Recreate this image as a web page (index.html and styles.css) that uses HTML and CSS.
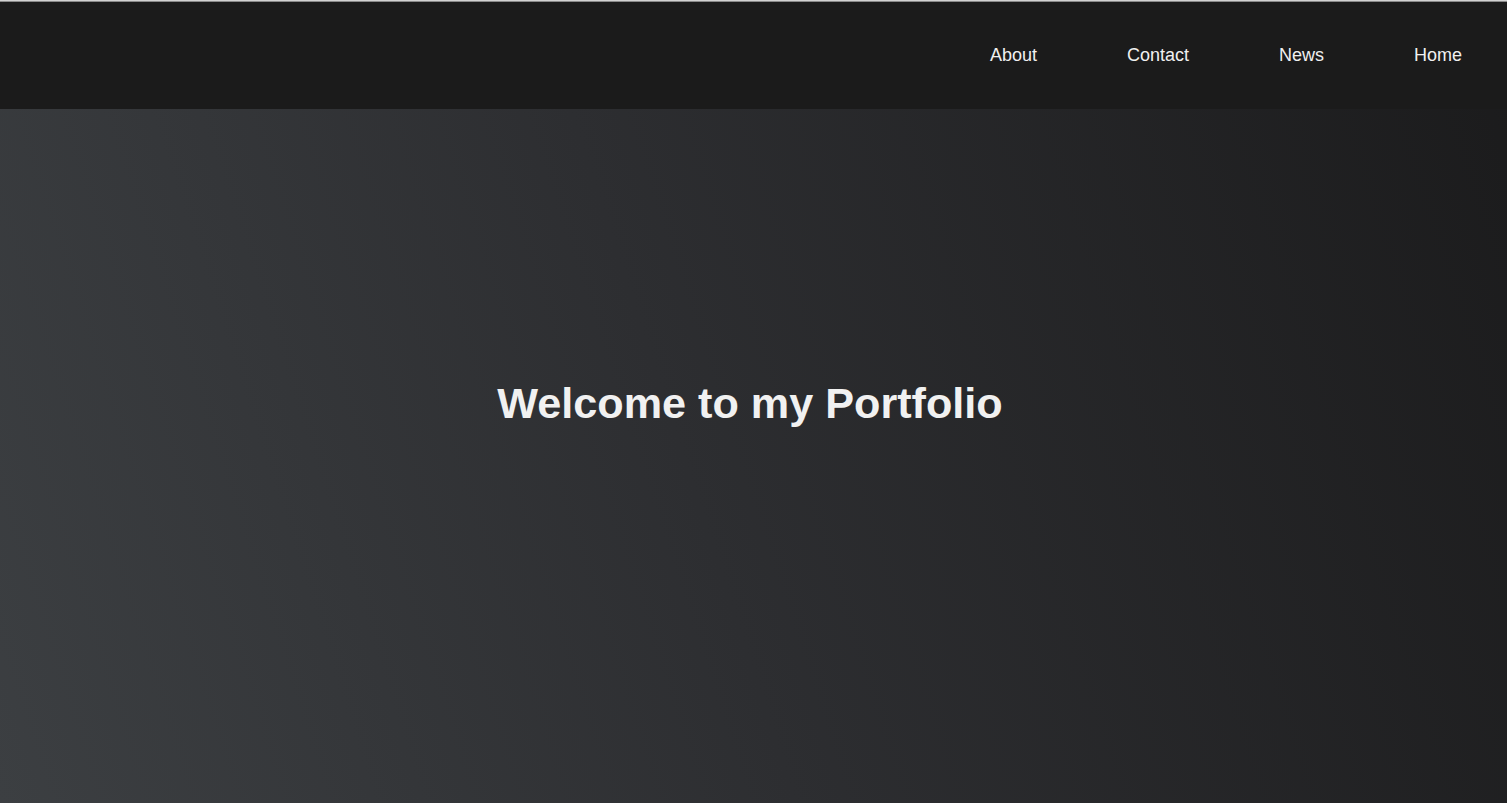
FILE: index.html
```html
<!DOCTYPE html>
<html lang="en">
<head>
<meta charset="utf-8">
<title>Portfolio</title>
<link rel="stylesheet" href="styles.css">
</head>
<body>
<div class="topline"></div>
<div class="page">
  <section class="hero">
    <h1 class="hero-title">Welcome to my Portfolio</h1>
  </section>
  <header class="topbar">
    <nav class="nav">
      <a class="nav-link" href="#">About</a>
      <a class="nav-link" href="#">Contact</a>
      <a class="nav-link" href="#">News</a>
      <a class="nav-link" href="#">Home</a>
    </nav>
  </header>
</div>
</body>
</html>
```
FILE: styles.css
```css
html, body {
  margin: 0;
  padding: 0;
  height: 100%;
}
body {
  font-family: "Liberation Sans", Arial, sans-serif;
  background: #1b1b1b;
  overflow: hidden;
  display: flex;
  flex-direction: column;
}
.topline {
  flex: 0 0 2px;
  background: linear-gradient(to bottom, #d2d2d2 0 1px, #8a8a8a 1px 2px);
}
.page {
  flex: 1 1 auto;
  display: grid;
  grid-template: 1fr / 1fr;
}
.hero {
  grid-area: 1 / 1;
  display: flex;
  align-items: center;
  justify-content: center;
  padding: 2px 7px 0 0;
  background: linear-gradient(72deg, #3c3f42 0%, #2d2e31 45%, #1b1b1c 100%);
}
.hero-title {
  margin: 0;
  color: #f1f1f1;
  font-size: 43.2px;
  font-weight: bold;
}
.topbar {
  grid-area: 1 / 1;
  align-self: start;
  height: 107px;
  background: #1b1b1b;
  display: flex;
  justify-content: flex-end;
  align-items: center;
}
.nav {
  display: flex;
}
.nav-link {
  color: #f0f0f0;
  text-decoration: none;
  font-size: 18px;
  padding: 0 45px;
}
```
